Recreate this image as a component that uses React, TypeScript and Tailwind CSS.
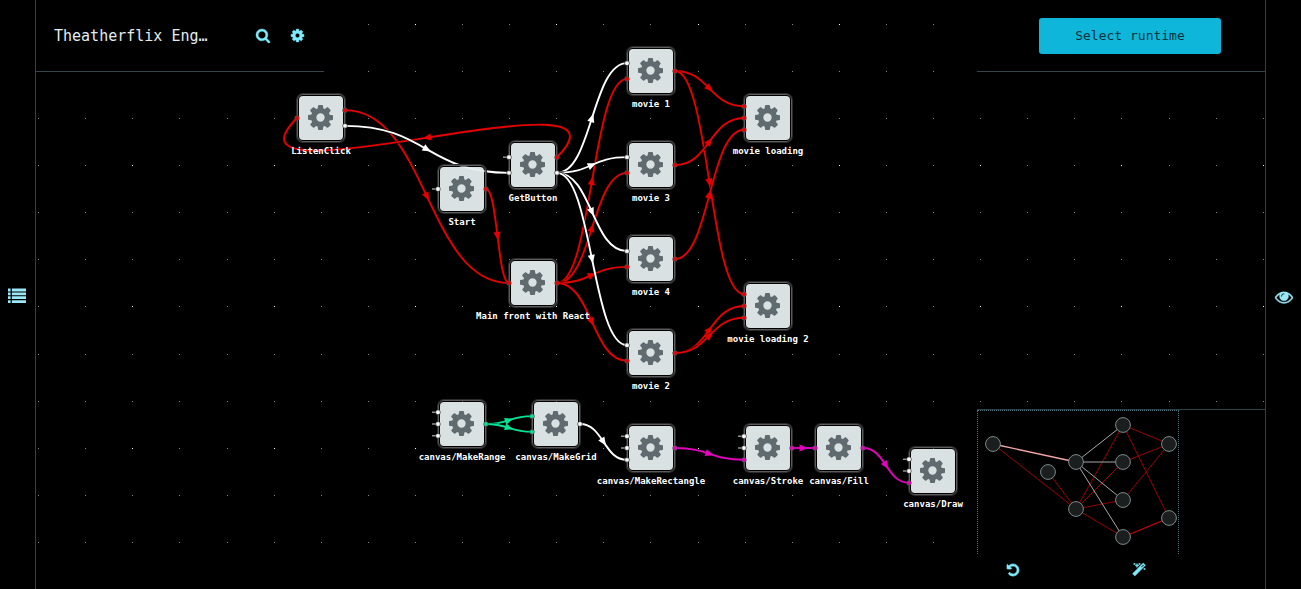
import React from "react";

type Point = [number, number];

interface GraphNode {
  id: string;
  label: string;
  x: number;
  y: number;
  inputs: string[];
  outputs: string[];
}

const RED = "#e60000";
const WHITE = "#ffffff";
const GREEN = "#00e696";
const PINK = "#e600bf";

const nodes: GraphNode[] = [
  { id: "listen", label: "ListenClick", x: 321, y: 118, inputs: [RED], outputs: [RED, WHITE] },
  { id: "start", label: "Start", x: 462, y: 189, inputs: ["open"], outputs: [RED] },
  { id: "get", label: "GetButton", x: 533, y: 165, inputs: ["open", WHITE], outputs: [RED, WHITE] },
  { id: "main", label: "Main front with React", x: 533, y: 283, inputs: [RED], outputs: [RED] },
  { id: "m1", label: "movie 1", x: 651, y: 71, inputs: [WHITE, RED], outputs: [RED] },
  { id: "m3", label: "movie 3", x: 651, y: 165, inputs: [WHITE, RED], outputs: [RED] },
  { id: "m4", label: "movie 4", x: 651, y: 259, inputs: [WHITE, RED], outputs: [RED] },
  { id: "m2", label: "movie 2", x: 651, y: 353, inputs: [WHITE, RED], outputs: [RED] },
  { id: "ml", label: "movie loading", x: 768, y: 118, inputs: [RED, RED, RED], outputs: [] },
  { id: "ml2", label: "movie loading 2", x: 768, y: 306, inputs: [RED, RED, RED], outputs: [] },
  { id: "range", label: "canvas/MakeRange", x: 462, y: 424, inputs: ["open", "open", "open"], outputs: [GREEN] },
  { id: "grid", label: "canvas/MakeGrid", x: 556, y: 424, inputs: [GREEN, GREEN], outputs: [WHITE] },
  { id: "rect", label: "canvas/MakeRectangle", x: 651, y: 448, inputs: ["open", "open", WHITE], outputs: [PINK] },
  { id: "stroke", label: "canvas/Stroke", x: 768, y: 448, inputs: ["open", "open", PINK], outputs: [PINK] },
  { id: "fill", label: "canvas/Fill", x: 839, y: 448, inputs: [PINK], outputs: [PINK] },
  { id: "draw", label: "canvas/Draw", x: 933, y: 471, inputs: ["open", "open", PINK], outputs: [] },
];

// [source node, output index, target node, input index, colour]
const edges: [string, number, string, number, string][] = [
  ["listen", 0, "main", 0, RED],
  ["get", 0, "listen", 0, RED],
  ["listen", 1, "get", 1, WHITE],
  ["start", 0, "main", 0, RED],
  ["main", 0, "m1", 1, RED],
  ["main", 0, "m3", 1, RED],
  ["main", 0, "m4", 1, RED],
  ["main", 0, "m2", 1, RED],
  ["get", 1, "m1", 0, WHITE],
  ["get", 1, "m3", 0, WHITE],
  ["get", 1, "m4", 0, WHITE],
  ["get", 1, "m2", 0, WHITE],
  ["m1", 0, "ml", 0, RED],
  ["m1", 0, "ml2", 0, RED],
  ["m3", 0, "ml", 1, RED],
  ["m4", 0, "ml", 2, RED],
  ["m2", 0, "ml2", 1, RED],
  ["m2", 0, "ml2", 2, RED],
  ["range", 0, "grid", 0, GREEN],
  ["range", 0, "grid", 1, GREEN],
  ["grid", 0, "rect", 2, WHITE],
  ["rect", 0, "stroke", 2, PINK],
  ["stroke", 0, "fill", 0, PINK],
  ["fill", 0, "draw", 2, PINK],
];

const PITCH = 47.1;

function portY(index: number, count: number) {
  return ((index + 1) * PITCH) / (count + 1) - PITCH / 2;
}

function portPoint(node: GraphNode, side: "in" | "out", index: number): Point {
  const count = side === "in" ? node.inputs.length : node.outputs.length;
  return [node.x + (side === "in" ? -24 : 24), node.y + portY(index, count)];
}

function Edge({ from, to, color }: { from: Point; to: Point; color: string }) {
  const [sx, sy] = from;
  const [tx, ty] = to;
  let c1: Point = [(sx + tx) / 2, sy];
  let c2: Point = [(sx + tx) / 2, ty];
  if (tx < sx) {
    const f = (sx - tx) * 0.36;
    const dir = ty > sy ? 1 : -1;
    c1 = [sx + f, sy + dir * f];
    c2 = [tx - f, ty - dir * f];
  }
  const d = `M${sx} ${sy}C${c1[0]} ${c1[1]} ${c2[0]} ${c2[1]} ${tx} ${ty}`;
  const mx = (sx + 3 * c1[0] + 3 * c2[0] + tx) / 8;
  const my = (sy + 3 * c1[1] + 3 * c2[1] + ty) / 8;
  const dx = c2[0] + tx - sx - c1[0];
  const dy = c2[1] + ty - sy - c1[1];
  const angle = (Math.atan2(dy, dx) * 180) / Math.PI;
  return (
    <g>
      <path d={d} fill="none" stroke="#000" strokeWidth="2.7" />
      <path d={d} fill="none" stroke={color} strokeWidth="1.9" />
      <path d="M-4 -3.6L4.4 0L-4 3.6Z" fill={color} transform={`translate(${mx} ${my}) rotate(${angle})`} />
    </g>
  );
}

const COG =
  "M1152 896q0-106-75-181t-181-75-181 75-75 181 75 181 181 75 181-75 75-181zm512-109v222q0 12-8 23t-20 13l-185 28q-19 54-39 91 35 50 107 138 10 12 10 25t-9 23q-27 37-99 108t-94 71q-12 0-26-9l-138-108q-44 23-91 38-16 136-29 186-7 28-36 28h-222q-14 0-24.5-8.5t-11.5-21.5l-28-184q-49-16-90-37l-141 107q-10 9-25 9-14 0-25-11-126-114-165-168-7-10-7-23 0-12 8-23 15-21 51-66.5t54-70.5q-27-50-41-99l-183-27q-13-2-21-12.5t-8-23.5v-222q0-12 8-23t19-13l186-28q14-46 39-92-40-57-107-138-10-12-10-24 0-10 9-23 26-36 98.5-107.5t94.5-71.5q13 0 26 10l138 107q44-23 91-38 16-136 29-186 7-28 36-28h222q14 0 24.5 8.5t11.5 21.5l28 184q49 16 90 37l142-107q9-9 24-9 13 0 25 10 129 119 165 170 7 8 7 22 0 12-8 23-15 21-51 66.5t-54 70.5q26 50 41 98l183 28q13 2 21 12.5t8 23.5z";
const SEARCH =
  "M1216 832q0-185-131.5-316.5t-316.5-131.5-316.5 131.5-131.5 316.5 131.5 316.5 316.5 131.5 316.5-131.5 131.5-316.5zm512 832q0 52-38 90t-90 38q-54 0-90-38l-343-342q-179 124-399 124-143 0-273.5-55.5t-225-150-150-225-55.5-273.5 55.5-273.5 150-225 225-150 273.5-55.5 273.5 55.5 225 150 150 225 55.5 273.5q0 220-124 399l343 343q37 37 37 90z";
const EYE =
  "M1664 960q-152-236-381-353 61 104 61 225 0 185-131.5 316.5t-316.5 131.5-316.5-131.5-131.5-316.5q0-121 61-225-229 117-381 353 133 205 333.5 326.5t434.5 121.5 434.5-121.5 333.5-326.5zm-720-384q0-20-14-34t-34-14q-125 0-214.5 89.5t-89.5 214.5q0 20 14 34t34 14 34-14 14-34q0-86 61-147t147-61q20 0 34-14t14-34zm848 384q0 34-20 69-140 230-376.5 368.5t-499.5 138.5-499.5-139-376.5-368q-20-35-20-69t20-69q140-229 376.5-368t499.5-139 499.5 139 376.5 368q20 35 20 69z";
const UNDO =
  "M1664 896q0 156-61 298t-164 245-245 164-298 61q-172 0-327-72.5t-264-204.5q-7-10-6.5-22.5t8.5-20.5l137-138q10-9 25-9 16 2 23 12 73 95 179 147t225 52q104 0 198.5-40.5t163.5-109.5 109.5-163.5 40.5-198.5-40.5-198.5-109.5-163.5-163.5-109.5-198.5-40.5q-98 0-188 35.5t-160 101.5l137 138q31 30 14 69-17 40-59 40h-448q-26 0-45-19t-19-45v-448q0-42 40-59 39-17 69 14l130 129q107-101 244.5-156.5t284.5-55.5q156 0 298 61t245 164 164 245 61 298z";
const MAGIC =
  "M1254 581l293-293-107-107-293 293zm447-293q0 27-18 45l-1286 1286q-18 18-45 18t-45-18l-198-198q-18-18-18-45t18-45l1286-1286q18-18 45-18t45 18l198 198q18 18 18 45zm-1351-190l98 30-98 30-30 98-30-98-98-30 98-30 30-98zm350 162l196 60-196 60-60 196-60-196-196-60 196-60 60-196zm930 478l98 30-98 30-30 98-30-98-98-30 98-30 30-98zm-640-640l98 30-98 30-30 98-30-98-98-30 98-30 30-98z";
const LIST =
  "M0 256h256v280H0zM384 256h1408v280H384zM0 640h256v280H0zM384 640h1408v280H384zM0 1024h256v280H0zM384 1024h1408v280H384zM0 1408h256v280H0zM384 1408h1408v280H384z";

interface IconProps {
  path: string;
  className: string;
  viewBox?: string;
  weight?: number;
}

function Icon({ path, className, viewBox = "0 0 1792 1792", weight = 0 }: IconProps) {
  return (
    <svg
      viewBox={viewBox}
      className={`overflow-visible ${className}`}
      fill="currentColor"
      stroke="currentColor"
      strokeWidth={weight}
      aria-hidden="true"
    >
      <path d={path} />
    </svg>
  );
}

function Dots() {
  const dots: React.ReactElement[] = [];
  for (let row = 0; row < 13; row++) {
    for (let col = 0; col < 27; col++) {
      const bright = row % 3 === 0 && col % 3 === 2;
      dots.push(
        <rect
          key={`${row}-${col}`}
          x={Math.floor(38.6 + col * PITCH)}
          y={Math.floor(24.3 + row * PITCH)}
          width="1"
          height="1"
          fill={bright ? "#ffffff" : "#868686"}
        />,
      );
    }
  }
  return <g>{dots}</g>;
}

function Ports({ node }: { node: GraphNode }) {
  return (
    <g>
      {node.inputs.map((color, i) => {
        const [x, y] = portPoint(node, "in", i);
        return (
          <g key={`i${i}`}>
            {color === "open" && <path d={`M${x - 6} ${y}H${x}`} stroke="#b8b8b8" strokeWidth="1.2" />}
            <circle cx={x} cy={y} r="2.6" fill="#4d4d4d" />
            <circle cx={x} cy={y} r="1.9" fill={color === "open" ? WHITE : color} />
          </g>
        );
      })}
      {node.outputs.map((color, i) => {
        const [x, y] = portPoint(node, "out", i);
        return (
          <g key={`o${i}`}>
            <circle cx={x} cy={y} r="2.6" fill="#4d4d4d" />
            <circle cx={x} cy={y} r="1.9" fill={color} />
          </g>
        );
      })}
    </g>
  );
}

function NodeBox({ node }: { node: GraphNode }) {
  return (
    <div
      className="absolute flex w-0 flex-col items-center"
      style={{ left: node.x, top: node.y - 24 }}
    >
      <div className="size-12 shrink-0 rounded-md border border-[#5c5c5c] bg-black/50 p-px shadow-[0_0_0_1px_#2b2b2b]">
        <div className="flex size-full items-center justify-center rounded bg-[#f1fafc]/90 pr-px pb-px text-[#5f6b6f]">
          <Icon path={COG} viewBox="128 128 1536 1536" className="size-[25px]" />
        </div>
      </div>
      <span className="mt-0.5 text-[9px] leading-[14px] font-bold whitespace-nowrap text-white">{node.label}</span>
    </div>
  );
}

function GraphCanvas() {
  const byId = new Map(nodes.map((n) => [n.id, n]));
  return (
    <div className="absolute inset-0 overflow-hidden">
      <svg className="absolute inset-0 size-full" aria-hidden="true">
        <Dots />
        {edges.map(([s, o, t, i, color]) => (
          <Edge
            key={`${s}${o}${t}${i}`}
            from={portPoint(byId.get(s)!, "out", o)}
            to={portPoint(byId.get(t)!, "in", i)}
            color={color}
          />
        ))}
      </svg>
      {nodes.map((n) => (
        <NodeBox key={n.id} node={n} />
      ))}
      <svg className="pointer-events-none absolute inset-0 size-full" aria-hidden="true">
        {nodes.map((n) => (
          <Ports key={n.id} node={n} />
        ))}
      </svg>
    </div>
  );
}

const mapPoints: Point[] = [
  [16, 35], [71, 63], [99, 53], [99, 100], [146, 16],
  [146, 53], [146, 91], [146, 128], [192, 35], [192, 109],
];

const mapLines: [number, number, string, number][] = [
  [0, 3, "#9c0000", 1], [1, 3, "#9c0000", 1], [3, 4, "#9c0000", 1], [3, 5, "#9c0000", 1],
  [3, 6, "#9c0000", 1], [3, 7, "#9c0000", 1], [4, 8, "#9c0000", 1], [4, 9, "#9c0000", 1],
  [5, 8, "#9c0000", 1], [6, 8, "#9c0000", 1], [7, 9, "#d00000", 1.3], [0, 2, "#f0a6a6", 1.3],
  [2, 4, "#a8a8a8", 1], [2, 5, "#a8a8a8", 1], [2, 6, "#a8a8a8", 1], [2, 7, "#a8a8a8", 1],
];

function Minimap() {
  return (
    <div className="h-36 w-[202px] border border-b-0 border-dotted border-[#4d7180]">
      <svg viewBox="1 2 200 143" className="size-full" role="img" aria-label="Graph overview">
        {mapLines.map(([a, b, color, width]) => (
          <path
            key={`${a}-${b}`}
            d={`M${mapPoints[a][0]} ${mapPoints[a][1]}L${mapPoints[b][0]} ${mapPoints[b][1]}`}
            stroke={color}
            strokeWidth={width}
          />
        ))}
        {mapPoints.map(([x, y]) => (
          <circle key={`${x}-${y}`} cx={x} cy={y} r="7.4" fill="#1a1e1f" stroke="#7b8a88" strokeWidth="1" />
        ))}
      </svg>
    </div>
  );
}

export default function App() {
  return (
    <div className="relative flex min-h-screen bg-black font-['DejaVu_Sans_Mono','Liberation_Mono',monospace] text-[#7debfb]">
      <GraphCanvas />

      <aside className="relative flex w-9 shrink-0 items-center border-r border-[#2f424a] bg-black">
        <button aria-label="Show library" className="flex h-9 w-full items-center pl-2">
          <Icon path={LIST} className="size-[18px] text-[#9ae8f8]" />
        </button>
      </aside>

      <main className="pointer-events-none relative flex min-w-0 flex-1 flex-col justify-between">
        <header className="flex justify-between">
          <div className="pointer-events-auto flex h-18 w-72 items-center border-b border-[#36454d] bg-black pl-[18px]">
            <h1 className="w-48 truncate text-[15px] leading-6 text-[#e3ebed]">Theatherflix Eng…</h1>
            <button aria-label="Search" className="flex h-9 w-[34px] items-center justify-center pt-px">
              <Icon path={SEARCH} className="size-[14px]" viewBox="64 128 1664 1664" weight={50} />
            </button>
            <button aria-label="Settings" className="flex h-9 w-[34px] items-center justify-center">
              <Icon path={COG} viewBox="128 128 1536 1536" className="size-[13px]" weight={50} />
            </button>
          </div>
          <div className="pointer-events-auto flex h-18 w-72 items-center justify-end border-b border-[#36454d] bg-black pr-11">
            <button className="h-9 w-[182px] rounded-[3px] bg-[#0eb7da] text-[13px] leading-6 text-[#04303b]">
              Select runtime
            </button>
          </div>
        </header>

        <section className="pointer-events-auto flex h-[180px] w-72 flex-col self-end border-t border-[#2f424a] bg-black">
          <Minimap />
          <div className="flex h-8 gap-[54px]">
            <button aria-label="Undo" className="flex w-18 items-center justify-center">
              <Icon path={UNDO} viewBox="128 128 1536 1536" className="size-[12px]" weight={90} />
            </button>
            <button aria-label="Autolayout" className="flex w-18 items-center justify-center">
              <Icon path={MAGIC} className="size-[14px]" weight={70} />
            </button>
          </div>
        </section>
      </main>

      <aside className="relative flex w-9 shrink-0 items-center justify-center border-l border-[#2f424a] bg-black">
        <button aria-label="Show inspector" className="flex h-9 w-full items-center justify-center pt-1">
          <Icon path={EYE} className="size-[18px] text-[#9ae8f8]" weight={40} />
        </button>
      </aside>
    </div>
  );
}
